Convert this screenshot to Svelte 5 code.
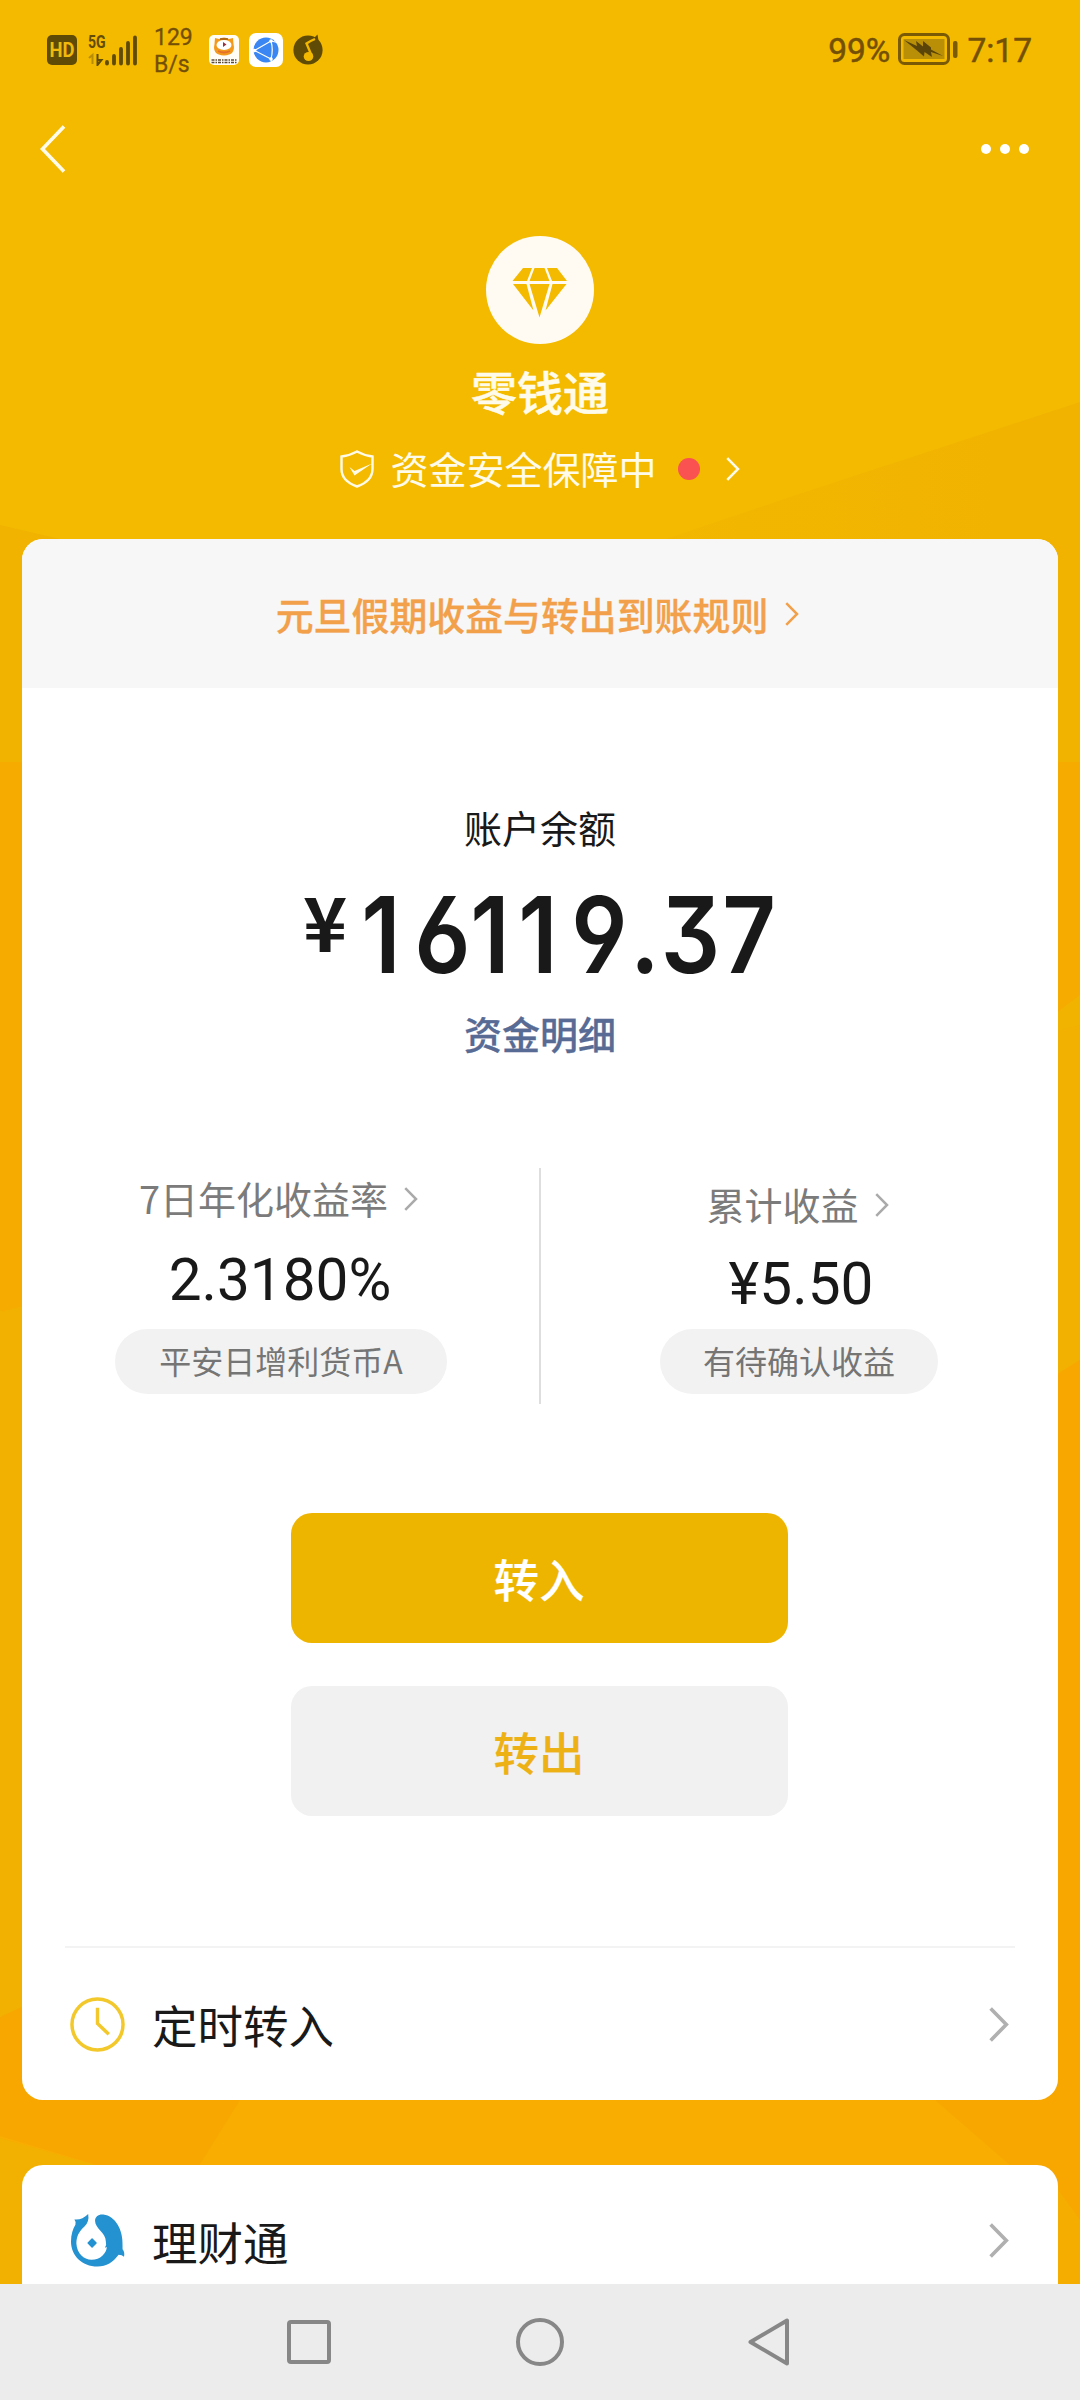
<script>
  const digits = '16119.37'.split('');
</script>

{#snippet chevron(cls)}
  <svg class="chevron {cls}" viewBox="0 0 13 23" fill="none" stroke="currentColor" stroke-width="2.4">
    <path d="M1 1 L11.3 11.5 L1 22" />
  </svg>
{/snippet}

<div class="screen">
  <svg class="backdrop" viewBox="0 0 1080 2284" preserveAspectRatio="none">
    <defs>
      <linearGradient id="facet" x1="660" x2="1080" y1="0" y2="0" gradientUnits="userSpaceOnUse">
        <stop offset="0" stop-color="#f2b700" />
        <stop offset="1" stop-color="#f1b200" />
      </linearGradient>
    </defs>
    <rect width="1080" height="2284" fill="#f3ba00" />
    <path d="M0 525 L60 539 V2284 H0Z" fill="#f1b200" />
    <path d="M660 541 L790 497 L1080 402 V2284 H660Z" fill="url(#facet)" />
    <path d="M0 762 L1080 762 V995 L1040 1025 L30 1330 L0 1310Z" fill="#f5ab00" />
    <path d="M0 1312 L1080 1025 V2284 H0Z" fill="#f2b000" />
    <path d="M1080 1360 L1040 1385 V1900 L0 2017 V2138 L120 2172 H1080Z" fill="#f8ad00" />
    <path d="M0 2017 L60 1990 L240 2100 L195 2172 H120 L0 2136Z" fill="#f7a700" />
    <path d="M1080 1360 L1040 1385 V2100 H935 L1010 2165 L1080 2220Z" fill="#f8a700" />
    <path d="M1040 2165 L1080 2220 V2284 H1040Z" fill="#f5ae00" />
  </svg>

  <header class="status">
    <svg class="hd" viewBox="0 0 30 30">
      <rect width="30" height="30" rx="5" fill="#5f4a06" />
      <text x="15" y="22" text-anchor="middle" font-family="Roboto" font-weight="700" font-size="20" textLength="25" lengthAdjust="spacingAndGlyphs" fill="#f0b90b">HD</text>
    </svg>
    <div class="signal">
      <span>5G</span>
      <svg viewBox="0 0 50 32">
        <path d="M1 24 L4.500 21 V30" fill="none" stroke="#b88d04" stroke-width="2" />
        <path d="M9.500 20 V31 L13.500 26 H9.500" fill="none" stroke="#5f4a06" stroke-width="2" />
        <path d="M19 28 V29.500 M26 22 V29.500 M33 15 V29.500 M40 9 V29.500 M47 3.500 V29.500" stroke="#5f4a06" stroke-width="3.800" stroke-linecap="round" />
      </svg>
    </div>
    <div class="speed"><span>129</span><span>B/s</span></div>
    <svg class="app-one" viewBox="0 0 30 30">
      <rect width="30" height="30" rx="5" fill="#fffdf6" />
      <path d="M6 3 L10 4 Q15 1 20 4 L24 3 L24.500 9 Q27 20 15 20.500 Q3 20 5.500 9Z" fill="#f39a1c" />
      <ellipse cx="15" cy="10" rx="7.500" ry="5" fill="#fff" />
      <path d="M11 4 H19" stroke="#8a4b12" stroke-width="1.200" />
      <path d="M14 7 L17.500 9.500 L14 12Z" fill="#9a3140" />
      <path d="M9 16 Q15 19 21 16" fill="none" stroke="#e5702b" stroke-width="1.800" />
      <path d="M2.500 25 H27.500 M2.500 27.500 H27.500" stroke="#5b4a36" stroke-width="1.600" stroke-dasharray="3 1 1.500 1" />
    </svg>
    <svg class="app-two" viewBox="0 0 34 34">
      <rect width="34" height="34" rx="7" fill="#fff" />
      <circle cx="17" cy="17" r="12.500" fill="#3a86f3" />
      <path d="M5.500 17.500 L22 8 M5.500 17.500 L22 26 M22 8 Q24.500 17 22 26 M22 8 L28.500 9.500 M22 26 L22.500 29.500" fill="none" stroke="#fff" stroke-width="1.200" />
      <circle cx="22" cy="8" r="1.800" fill="#fff" /><circle cx="22" cy="26" r="1.800" fill="#fff" /><circle cx="5.500" cy="17.500" r="1.800" fill="#fff" />
    </svg>
    <svg class="music" viewBox="0 0 30 31">
      <circle cx="15" cy="16" r="14.600" fill="#5f4a06" />
      <path d="M21 4 L24.500 0.500 L25.500 7Z" fill="#5f4a06" />
      <ellipse cx="15.500" cy="22.500" rx="4.800" ry="4.500" fill="#f3b900" />
      <path d="M19 22.500 L13.500 9.500 Q17 7 22 5" fill="none" stroke="#f3b900" stroke-width="2.400" />
    </svg>
    <div class="right">
      <span>99%</span>
      <svg class="battery" viewBox="0 0 61 32" fill="none">
        <rect x="1.500" y="1.500" width="49" height="29" rx="5" stroke="#7a5a05" stroke-width="3" />
        <rect x="5.500" y="6" width="41" height="20" fill="#b98f08" />
        <path d="M6 7 L19 13 L18 8 L25 13.500 L25 8 L33 14.500 L33 16.500 L45 23 L33 19 L34 24 L26.500 19 L26 23.500 L19 17.500 Z" fill="#5a4408" />
        <rect x="55" y="8" width="4.500" height="17" rx="2" fill="#7a5a05" />
      </svg>
      <span>7:17</span>
    </div>
  </header>

  <nav class="topbar">
    <svg class="back" viewBox="0 0 26 48" fill="none"><path d="M24 1.500 L2.500 24 L24 46.500" stroke="#fffbe8" stroke-width="3.600" /></svg>
    <div class="dots"><i></i><i></i><i></i></div>
  </nav>

  <section class="hero">
    <div class="logo">
      <svg viewBox="0 0 56 50" fill="#f3ba00">
        <path d="M11 0 H20 L15 13 H0.500Z M22.500 0 H32.500 L37.500 13 H17.500Z M35 0 H45 L55 13 H40Z" />
        <path d="M1 16 H14.500 L21.500 42.500Z M17.500 16 H37.500 L27.500 49.500Z M40.500 16 H54.500 L33.500 42.500Z" />
      </svg>
    </div>
    <h1>零钱通</h1>
    <div class="safe">
      <svg class="shield" viewBox="0 0 34 38" fill="none">
        <path d="M17 1.500 Q24 5.500 32.500 6.500 V19 Q32.500 31 17 36.500 Q1.500 31 1.500 19 V6.500 Q10 5.500 17 1.500Z" stroke="#fffbe8" stroke-width="2.400" />
        <path d="M9.500 17 L14.500 21 L32 13.500 L14.500 25.500Z" fill="#fffbe8" />
      </svg>
      <span>资金安全保障中</span>
      <i></i>
      {@render chevron('')}
    </div>
  </section>

  <main class="card">
    <div class="notice"><span>元旦假期收益与转出到账规则</span>{@render chevron('')}</div>
    <div class="label">账户余额</div>
    <div class="amount"><span class="yen">¥</span><span class="number">{#each digits as d}<b class:one={d === '1'} class:point={d === '.'} class:seven={d === '7'}>{d}</b>{/each}</span></div>
    <div class="detail">资金明细</div>

    <div class="stats">
      <div class="stat">
        <div class="name"><span>7日年化收益率</span>{@render chevron('pale')}</div>
        <div class="value">2.3180%</div>
        <div class="pill">平安日增利货币A</div>
      </div>
      <div class="stat second">
        <div class="name"><span>累计收益</span>{@render chevron('pale')}</div>
        <div class="value">¥5.50</div>
        <div class="pill">有待确认收益</div>
      </div>
    </div>

    <button class="primary">转入</button>
    <button class="secondary">转出</button>

    <div class="row scheduled">
      <svg class="icon" viewBox="0 0 56 56" fill="none" stroke="#f2c82a" stroke-width="3.500">
        <circle cx="28" cy="28" r="26" />
        <path d="M28 11 V27 L39.500 38" />
      </svg>
      <span>定时转入</span>
      {@render chevron('big')}
    </div>
  </main>

  <section class="card wealth">
    <div class="row">
      <svg class="icon" viewBox="0 0 56 56">
        <path fill="#2491d0" d="M4.500 6.500 Q12 7.500 18.500 1 Q20 9 14.500 14 C9 19 6.500 24 6.500 31 C7 41 14 47.500 22 47.500 C31 47.500 37 41 37.500 34.500 L35.500 35.500 Q37.500 32 36.500 29 C36.500 20 25.500 16 25.500 8 C25.500 3.500 29 1 34 1.500 C46 3 54.500 17 53.500 34 L53.500 37 Q56 40 55 44.500 Q53 42.500 49.500 42.500 C44 50 37 54.500 28 54.500 C12 54.500 1 43 1 29 C1 22 3 16 5.500 12 Q6.500 9 4.500 6.500Z" />
        <path fill="#2491d0" d="M22.500 26.500 L26.500 30.500 L22.500 34.500 L18.500 30.500Z" stroke="#2491d0" stroke-width="1.500" stroke-linejoin="round" />
      </svg>
      <span>理财通</span>
      {@render chevron('big')}
    </div>
  </section>

  <footer class="keys">
    <svg viewBox="0 0 60 60"><rect x="10" y="10" width="40" height="40" rx="2" /></svg>
    <svg viewBox="0 0 60 60"><circle cx="30" cy="30" r="22" /></svg>
    <svg viewBox="0 0 60 60"><path d="M9.500 30 L46 8.500 V51.500Z" /></svg>
  </footer>
</div>

<style>
  :global(body) { margin: 0; background: #f3ba00; }
  .screen {
    position: relative;
    display: flex;
    flex-direction: column;
    width: 1080px;
    height: 2400px;
    overflow: hidden;
    font-family: "Noto Sans CJK SC", sans-serif;
    color: #191919;
  }
  .backdrop { position: absolute; inset: 0 0 auto 0; width: 1080px; height: 2284px; z-index: -1; }
  svg { display: block; flex: none; }

  .status {
    display: flex;
    align-items: center;
    height: 100px;
    flex: none;
    box-sizing: border-box;
    padding: 0 48px 0 47px;
    font-family: Roboto, sans-serif;
    color: #735005;
  }
  .hd { width: 30px; height: 30px; }
  .signal { display: grid; width: 50px; height: 32px; margin: -1px 0 0 11px; }
  .signal > * { grid-area: 1 / 1; }
  .signal svg { width: 50px; height: 32px; }
  .signal span { width: 30px; margin-top: -3px; font-size: 19px; line-height: 22px; font-weight: 700; color: #634c05; transform: scaleX(0.74); transform-origin: left; }
  .speed { display: flex; flex-direction: column; width: 41px; margin: 1px 0 0 16px; font-size: 23px; line-height: 27px; -webkit-text-stroke: 0.300px; }
  .app-one { width: 30px; height: 30px; margin-left: 14px; }
  .app-two { width: 34px; height: 34px; margin-left: 10px; }
  .music { width: 30px; height: 31px; margin: -1px 0 0 10px; }
  .right { display: flex; align-items: center; margin: 1px 0 0 auto; font-size: 33.500px; line-height: 40px; -webkit-text-stroke: 0.500px; }
  .battery { width: 61px; height: 32px; margin: -3px 8px 0; }

  .topbar { display: flex; align-items: center; justify-content: space-between; height: 98px; flex: none; padding: 0 51px 0 40px; }
  .back { width: 26px; height: 48px; }
  .dots { display: flex; gap: 9px; }
  .dots i { width: 10px; height: 10px; border-radius: 50%; background: #fff; }

  .hero { display: flex; flex-direction: column; align-items: center; height: 341px; flex: none; box-sizing: border-box; padding-top: 38px; color: #fffbea; }
  .logo { display: flex; justify-content: center; width: 108px; height: 108px; box-sizing: border-box; padding-top: 32px; border-radius: 50%; background: #fffbf2; }
  .logo svg { width: 56px; height: 50px; }
  h1 { margin: 12px 0 0; font-size: 46px; line-height: 68px; font-weight: 500; -webkit-text-stroke: 0.500px; }
  .safe { display: flex; align-items: center; margin-top: 17px; height: 56px; font-size: 38px; line-height: 56px; }
  .safe span { height: 59px; }
  .shield { width: 34px; height: 38px; margin-right: 16px; }
  .safe i { width: 22px; height: 22px; margin: 0 26px 0 21px; border-radius: 50%; background: #fa5151; }

  .chevron { width: 14px; height: 24px; }
  .chevron.pale { margin-top: 1px; color: #aaa; }
  .chevron.big { width: 20px; height: 35px; margin-left: auto; color: #b0b0b0; }

  .card { display: flex; flex-direction: column; align-items: center; flex: none; height: 1561px; margin: 0 22px; border-radius: 21px; background: #fff; overflow: hidden; }
  .notice { display: flex; align-items: center; justify-content: center; gap: 17px; align-self: stretch; height: 149px; padding-right: 5px; background: #f7f7f7; color: #f2a04a; font-size: 37.900px; font-weight: 500; -webkit-text-stroke: 0.300px; }
  .label { margin-top: 111px; font-size: 38px; line-height: 56px; }
  .amount { display: flex; width: 474px; height: 104px; margin-top: 28px; font-family: Inter, sans-serif; font-weight: 600; }
  .yen { width: 62px; font-size: 75px; line-height: 90px; margin-top: -8px; transform: scaleX(1); transform-origin: left; font-family: "Noto Sans CJK SC", sans-serif; font-weight: 700; }
  .number { display: flex; font-size: 106px; line-height: 104px; font-feature-settings: "cv03", "cv04", "cv09"; }
  .number b { display: flex; justify-content: center; width: 61px; font-weight: 600; transform: scaleX(0.880); }
  .number .one { width: 34px; margin-right: 14px; }
  .number .point { width: 30px; }
  .number .seven { width: 56px; }
  .detail { margin-top: 18px; color: #576b95; font-size: 38px; line-height: 56px; font-weight: 500; -webkit-text-stroke: 0.300px; }

  .stats { display: grid; grid-template-columns: 1fr 1fr; align-self: stretch; height: 236px; margin-top: 107px; background: linear-gradient(#dedede, #dedede) center / 2px 100% no-repeat; }
  .stat { display: flex; flex-direction: column; align-items: center; padding-top: 2px; }
  .name { display: flex; align-items: center; gap: 16px; height: 56px; padding-right: 5px; color: #7b7b7b; font-size: 38px; line-height: 56px; }
  .value { height: 70px; margin-top: 19px; margin-right: 2px; font-family: Roboto, sans-serif; font-size: 58.500px; line-height: 70px; }
  .pill { height: 65px; margin-top: 14px; padding: 0 44px; border-radius: 33px; background: #f2f2f2; color: #757575; font-size: 32px; line-height: 62px; }
  .second { padding-top: 8px; }
  .second .name { padding-right: 3px; }
  .second .value { margin: 17px -4px 0 0; }
  .second .pill { margin-top: 10px; padding: 0 43px; }

  button { width: 497px; height: 130px; margin-right: 2px; padding: 0; border: 0; border-radius: 21px; font: 500 45.500px/130px "Noto Sans CJK SC", sans-serif; -webkit-text-stroke: 0.200px; }
  .primary { margin-top: 109px; background: #eeb500; color: #fff; }
  .secondary { margin-top: 43px; background: #f1f1f1; color: #edb115; }

  .row { display: flex; align-items: center; align-self: stretch; flex: none; height: 151px; margin: 0 43px; padding: 0 6px 0 5px; font-size: 45.500px; }
  .row .icon { width: 55px; height: 55px; margin-right: 27px; }
  .scheduled { margin-top: 130px; border-top: 2px solid #f3f3f3; }
  .scheduled svg { margin-top: 2px; }
  .wealth { height: 119px; margin-top: 65px; border-radius: 21px 21px 0 0; }

  .keys { display: flex; justify-content: center; align-items: center; gap: 171px; flex: none; height: 116px; background: #ececec; }
  .keys svg { width: 60px; height: 60px; fill: none; stroke: #878787; stroke-width: 4; stroke-linejoin: round; }
</style>
